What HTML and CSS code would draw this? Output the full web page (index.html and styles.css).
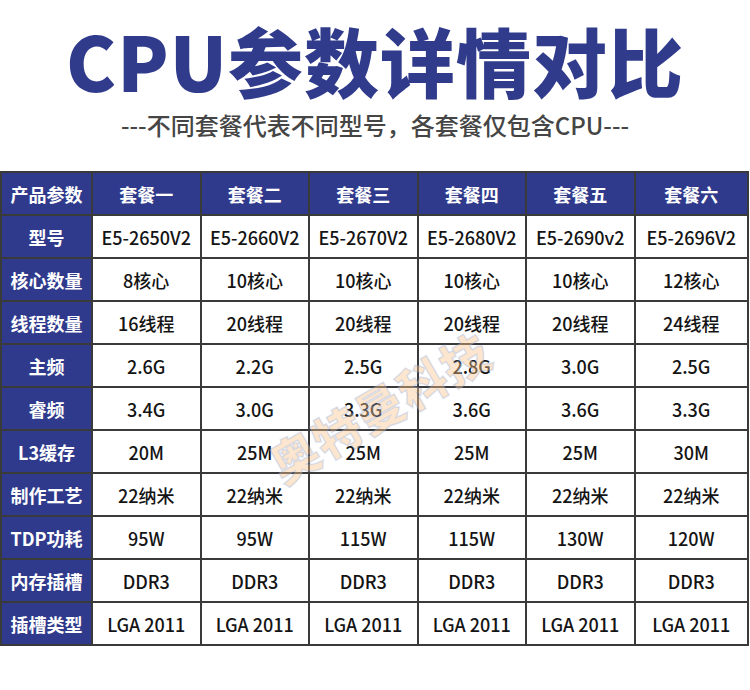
FILE: index.html
```html
<!DOCTYPE html>
<html lang="zh-CN">
<head>
<meta charset="utf-8">
<title>CPU参数详情对比</title>
<link rel="stylesheet" href="styles.css">
</head>
<body>
<div class="page">
  <h1 class="title">CPU参数详情对比</h1>
  <p class="subtitle">---不同套餐代表不同型号，各套餐仅包含CPU---</p>
  <div class="table-wrap">
    <table class="spec">
      <colgroup>
        <col class="c-head"><col class="c-pkg"><col class="c-pkg"><col class="c-pkg"><col class="c-pkg"><col class="c-pkg"><col class="c-last">
      </colgroup>
      <thead>
        <tr><th>产品参数</th><th>套餐一</th><th>套餐二</th><th>套餐三</th><th>套餐四</th><th>套餐五</th><th>套餐六</th></tr>
      </thead>
      <tbody>
        <tr><th>型号</th><td>E5-2650V2</td><td>E5-2660V2</td><td>E5-2670V2</td><td>E5-2680V2</td><td>E5-2690v2</td><td>E5-2696V2</td></tr>
        <tr><th>核心数量</th><td>8核心</td><td>10核心</td><td>10核心</td><td>10核心</td><td>10核心</td><td>12核心</td></tr>
        <tr><th>线程数量</th><td>16线程</td><td>20线程</td><td>20线程</td><td>20线程</td><td>20线程</td><td>24线程</td></tr>
        <tr><th>主频</th><td>2.6G</td><td>2.2G</td><td>2.5G</td><td>2.8G</td><td>3.0G</td><td>2.5G</td></tr>
        <tr><th>睿频</th><td>3.4G</td><td>3.0G</td><td>3.3G</td><td>3.6G</td><td>3.6G</td><td>3.3G</td></tr>
        <tr><th>L3缓存</th><td>20M</td><td>25M</td><td>25M</td><td>25M</td><td>25M</td><td>30M</td></tr>
        <tr><th>制作工艺</th><td>22纳米</td><td>22纳米</td><td>22纳米</td><td>22纳米</td><td>22纳米</td><td>22纳米</td></tr>
        <tr><th>TDP功耗</th><td>95W</td><td>95W</td><td>115W</td><td>115W</td><td>130W</td><td>120W</td></tr>
        <tr><th>内存插槽</th><td>DDR3</td><td>DDR3</td><td>DDR3</td><td>DDR3</td><td>DDR3</td><td>DDR3</td></tr>
        <tr><th>插槽类型</th><td>LGA 2011</td><td>LGA 2011</td><td>LGA 2011</td><td>LGA 2011</td><td>LGA 2011</td><td>LGA 2011</td></tr>
      </tbody>
    </table>
    <div class="watermark">奥特曼科技</div>
  </div>
</div>
</body>
</html>
```

FILE: styles.css
```css
html, body {
  margin: 0;
  padding: 0;
  background: #ffffff;
}

.page {
  width: 750px;
  font-family: "Noto Sans CJK SC", "Noto Sans", sans-serif;
}

.title {
  margin: 0;
  padding-top: 22px;
  height: 75px;
  font-size: 75px;
  line-height: 75px;
  font-weight: 900;
  color: #303b8c;
  text-align: center;
  letter-spacing: 1px;
}

.subtitle {
  margin: 16px 0 0;
  height: 24px;
  font-size: 24px;
  line-height: 24px;
  font-weight: 500;
  color: #454545;
  text-align: center;
}

.table-wrap {
  position: relative;
  margin-top: 34px;
  width: 750px;
  overflow: hidden;
}

.spec {
  width: 749px;
  table-layout: fixed;
  border-collapse: collapse;
}

.c-head { width: 91px; }
.c-pkg { width: 108.5px; }
.c-last { width: auto; }

.spec th,
.spec td {
  height: 41px;
  padding: 0;
  border: 2px solid #3a3a3a;
  text-align: center;
  vertical-align: middle;
  font-size: 18px;
  line-height: 20px;
  white-space: nowrap;
}

.spec th {
  background: #2f3a8c;
  color: #ffffff;
  font-weight: 700;
}

.spec td {
  background: #ffffff;
  color: #141414;
  font-weight: 500;
}

.watermark {
  position: absolute;
  left: 254px;
  top: 200px;
  width: 250px;
  height: 70px;
  font-size: 48px;
  line-height: 70px;
  font-weight: 900;
  letter-spacing: 1px;
  text-align: center;
  color: rgba(248, 196, 140, 0.42);
  -webkit-text-stroke: 1.5px rgba(130, 160, 220, 0.28);
  transform: rotate(-30deg);
  transform-origin: center center;
  pointer-events: none;
}
```
